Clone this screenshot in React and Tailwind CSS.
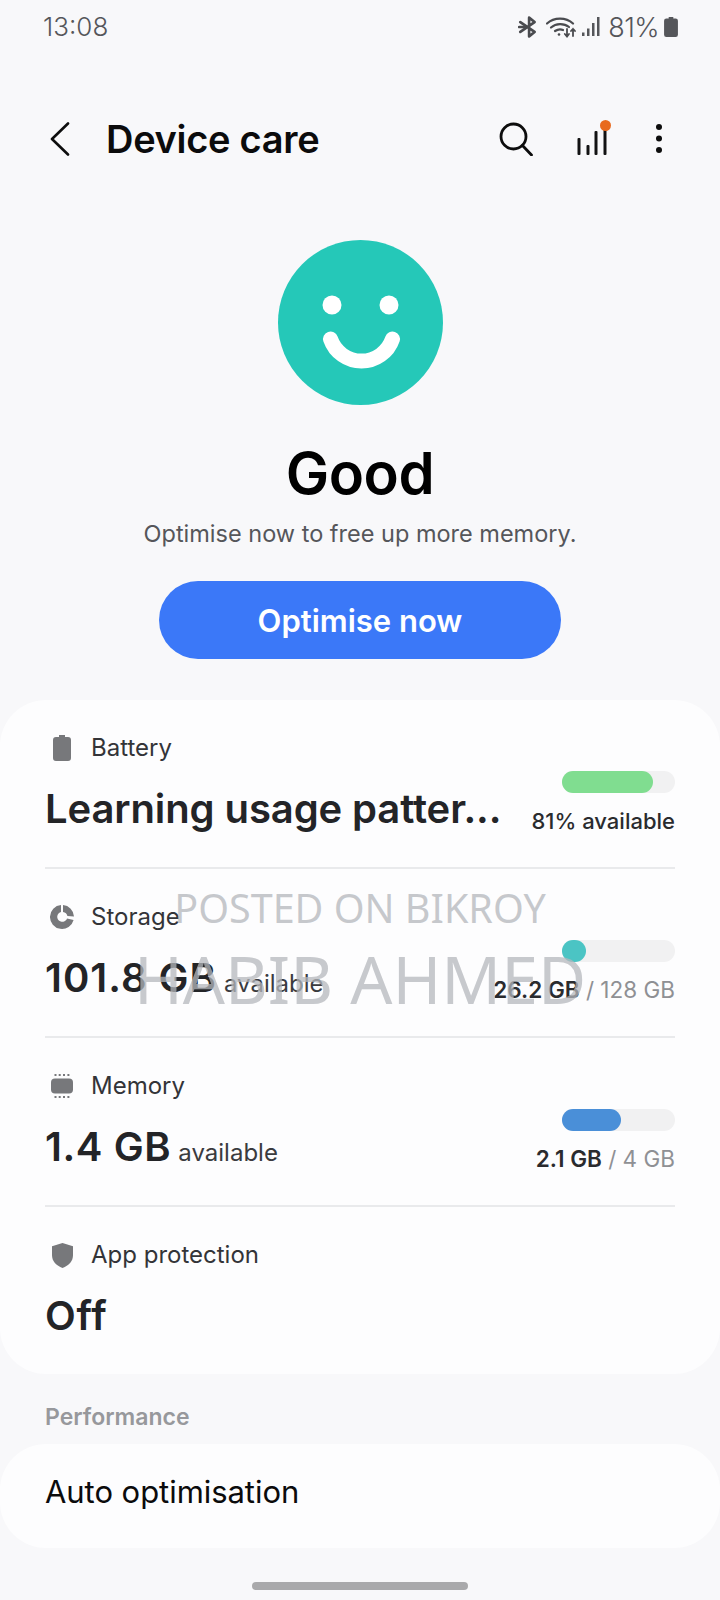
import React from "react";

const BatteryGlyph = ({ className, fill }) => (
  <svg viewBox="0 0 18 26" className={className}>
    <path d="M6 0h6v2h3a3 3 0 0 1 3 3v18a3 3 0 0 1-3 3H3a3 3 0 0 1-3-3V5a3 3 0 0 1 3-3h3z" fill={fill} />
  </svg>
);

const StorageGlyph = () => (
  <svg viewBox="0 0 24 24" className="w-[24px] h-[24px]">
    <path d="M11 0v7a5 5 0 1 0 6 6.4L23.6 15A12 12 0 1 1 11 0z" fill="#77787b" />
    <path d="M13 0a12 12 0 0 1 11 11.4L17.4 11A5 5 0 0 0 13 7z" fill="#77787b" />
  </svg>
);

const MemoryGlyph = () => (
  <svg viewBox="0 0 22 24" className="w-[22px] h-[24px]">
    <rect x="0" y="4.5" width="22" height="15" rx="4" fill="#77787b" />
    <g fill="#77787b">
      <rect x="3.5" y="0" width="2" height="2" /><rect x="7.7" y="0" width="2" height="2" />
      <rect x="12" y="0" width="2" height="2" /><rect x="16.4" y="0" width="2" height="2" />
      <rect x="3.5" y="22" width="2" height="2" /><rect x="7.7" y="22" width="2" height="2" />
      <rect x="12" y="22" width="2" height="2" /><rect x="16.4" y="22" width="2" height="2" />
    </g>
  </svg>
);

const ShieldGlyph = () => (
  <svg viewBox="0 0 21 25" className="w-[21px] h-[25px]">
    <path d="M10.5 0 21 3.2V12c0 6.4-4.2 10.6-10.5 13C4.2 22.6 0 18.4 0 12V3.2z" fill="#77787b" />
  </svg>
);

const Bar = ({ width, color }) => (
  <div className="w-[113px] h-[22px] rounded-full bg-[#f1f1f2] self-end">
    <div className={`h-full rounded-full ${color} ${width}`} />
  </div>
);

const Row = ({ icon, label, value, valueClass, suffix, bar, right }) => (
  <div className="h-[167px] flex justify-between">
    <div className="flex flex-col">
      <div className="flex items-center h-[30px] mt-[33px]">
        <div className="w-[46px] flex justify-center pr-[12px] shrink-0">{icon}</div>
        <span className="text-[24px] leading-[30px] text-[#333438]">{label}</span>
      </div>
      <div className="flex items-baseline mt-[22px] h-[48px]">
        <span className={`text-[40px] leading-[48px] font-semibold text-[#232427] whitespace-nowrap ${valueClass}`}>{value}</span>
        {suffix && <span className="text-[24px] leading-[30px] text-[#3a3b3f] ml-[7px]">{suffix}</span>}
      </div>
    </div>
    {bar && (
      <div className="flex flex-col items-end w-[200px] pt-[71px]">
        {bar}
        <div className="mt-[14px] leading-[28px] whitespace-nowrap">{right}</div>
      </div>
    )}
  </div>
);

const Divider = () => <div className="h-[2px] bg-[#e9eaec]" />;

export default function App() {
  return (
    <div className="relative w-[720px] h-[1600px] overflow-hidden bg-[#f8f8fa] font-['Inter',sans-serif]">
      {/* status bar */}
      <div className="h-[54px] flex items-center justify-between pl-[43px] pr-[42px]">
        <span className="text-[26px] leading-none text-[#55565a] font-light">13:08</span>
        <div className="flex items-center">
          <svg viewBox="0 0 18 20" className="w-[20px] h-[22px]" fill="none" stroke="#4a4b4f" strokeWidth="2.400" strokeLinecap="round" strokeLinejoin="round">
            <path d="M2 5.500 15 14.500 10 18.500V1.500L15 5.500 2 14.500" />
            <path d="M1 10h5" />
          </svg>
          <svg viewBox="0 0 30 22" className="w-[30px] h-[22px] ml-[8px]" fill="none" stroke="#4a4b4f" strokeWidth="2.200" strokeLinecap="round">
            <path d="M1 7.500C8 1 20 1 27 7.500" />
            <path d="M5 11.500C10 7 18 7 23 11" />
            <path d="M9 15c3-2 6-2 8-1" />
            <circle cx="13" cy="18.500" r="1.300" fill="#4a4b4f" stroke="none" />
            <path d="M21 13v7M18.800 18 21 20.500 23 18" strokeWidth="1.800" />
            <path d="M27 20v-7M25 15l2-2.200 2 2.200" strokeWidth="1.800" />
          </svg>
          <svg viewBox="0 0 18 20" className="w-[18px] h-[20px] ml-[6px]" fill="#55565a">
            <rect x="0" y="15.500" width="2.500" height="3.500" /><rect x="5" y="11.500" width="2.500" height="7.500" />
            <rect x="10" y="6" width="2.500" height="13" /><rect x="15" y="0" width="2.500" height="19" />
          </svg>
          <span className="text-[27px] leading-none text-[#55565a] font-light ml-[8px] tracking-[-0.6px]">81%</span>
          <BatteryGlyph className="w-[14px] h-[20px] ml-[5px]" fill="#55565a" />
        </div>
      </div>

      {/* app bar */}
      <div className="h-[170px] flex items-center pl-[50px] pr-[57px]">
        <svg viewBox="0 0 20 34" className="w-[20px] h-[34px]" fill="none" stroke="#0d0d0d" strokeWidth="2.600" strokeLinecap="round" strokeLinejoin="round">
          <path d="M18 1.500 2 17l16 15.500" />
        </svg>
        <h1 className="ml-[36px] text-[38px] leading-none font-semibold text-[#0b0b0c] tracking-[-0.3px]">Device care</h1>
        <div className="ml-auto flex items-center">
          <svg viewBox="0 0 34 34" className="w-[34px] h-[34px]" fill="none" stroke="#0d0d0d" strokeWidth="2.800" strokeLinecap="round">
            <circle cx="14.500" cy="14.500" r="12.500" /><path d="M23.500 23.500 32.500 33" />
          </svg>
          <div className="relative w-[32px] h-[34px] ml-[43px]">
            <svg viewBox="0 0 32 34" className="w-[32px] h-[34px]" fill="#121213">
              <rect x="1.500" y="16" width="3" height="17" rx="1" /><rect x="10.500" y="23" width="3" height="10" rx="1" />
              <rect x="18.500" y="9" width="3" height="24" rx="1" /><rect x="27.500" y="3" width="3" height="30" rx="1" />
            </svg>
            <div className="absolute left-[23.500px] -top-[2.500px] w-[11px] h-[11px] rounded-full bg-[#e86a1f]" />
          </div>
          <svg viewBox="0 0 8 34" className="w-[8px] h-[34px] ml-[47px]" fill="#0d0d0d">
            <circle cx="4" cy="5" r="3" /><circle cx="4" cy="16.500" r="3" /><circle cx="4" cy="28" r="3" />
          </svg>
        </div>
      </div>

      {/* hero */}
      <div className="flex flex-col items-center mt-[16px]">
        <svg viewBox="0 0 165 165" className="w-[165px] h-[165px]">
          <circle cx="82.500" cy="82.500" r="82.500" fill="#25c8b8" />
          <circle cx="54" cy="65" r="9.500" fill="#fff" />
          <circle cx="111" cy="65" r="9.500" fill="#fff" />
          <path d="M52.500 99A32.800 32.800 0 0 0 114.500 99" fill="none" stroke="#fff" strokeWidth="15" strokeLinecap="round" />
        </svg>
        <div className="mt-[36px] text-[58px] leading-[64px] font-semibold text-black tracking-[-0.4px]">Good</div>
        <p className="mt-[14px] text-[23.500px] leading-[30px] text-[#55565a]">Optimise now to free up more memory.</p>
        <button className="mt-[32px] w-[402px] h-[78px] pt-[2px] rounded-full bg-[#3b78f8] text-white text-[31px] font-semibold">Optimise now</button>
      </div>

      {/* main card */}
      <div className="mt-[41px] h-[674px] rounded-[46px] bg-[#fdfdfe] px-[45px]">
        <Row
          icon={<BatteryGlyph className="w-[18px] h-[26px]" fill="#77787b" />}
          label="Battery"
          value="Learning usage patter..."
          valueClass="tracking-[-0.1px]"
          bar={<Bar width="w-[91px]" color="bg-[#80dd90]" />}
          right={<span className="text-[22px] font-medium text-[#2a2b2e]">81% available</span>}
        />
        <Divider />
        <Row
          icon={<StorageGlyph />}
          label="Storage"
          value="101.8 GB"
          valueClass="tracking-[1px]"
          suffix="available"
          bar={<Bar width="w-[24px]" color="bg-[#4bc4c4]" />}
          right={<span className="text-[22.500px]"><span className="font-semibold text-[#2a2b2e]">26.2 GB</span><span className="text-[#8f9094]"> / 128 GB</span></span>}
        />
        <Divider />
        <Row
          icon={<MemoryGlyph />}
          label="Memory"
          value="1.4 GB"
          valueClass="tracking-[0.6px]"
          suffix="available"
          bar={<Bar width="w-[59px]" color="bg-[#4a8fd8]" />}
          right={<span className="text-[22.500px]"><span className="font-semibold text-[#2a2b2e]">2.1 GB</span><span className="text-[#8f9094]"> / 4 GB</span></span>}
        />
        <Divider />
        <Row icon={<ShieldGlyph />} label="App protection" value="Off" valueClass="tracking-[0.8px]" />
      </div>

      {/* performance */}
      <div className="mt-[28px] px-[45px] text-[23px] leading-[30px] font-semibold text-[#97989c]">Performance</div>
      <div className="mt-[12px] h-[104px] rounded-[46px] bg-[#fdfdfe] px-[45px] pb-[10px] flex items-center">
        <span className="text-[31px] leading-none text-[#0b0b0c] tracking-[-0.05px]">Auto optimisation</span>
      </div>

      {/* home indicator */}
      <div className="absolute left-[252px] top-[1582px] w-[216px] h-[8px] rounded-full bg-[#a9a9ab]" />

      {/* watermark */}
      <div className="absolute left-0 right-0 top-[880px] flex flex-col items-center pointer-events-none font-['Noto_Sans',sans-serif] font-normal text-[#b4b7bc]/75 whitespace-nowrap">
        <span className="text-[39.500px] leading-[56px]">POSTED ON BIKROY</span>
        <span className="text-[66px] leading-[84px]">HABIB AHMED</span>
      </div>
    </div>
  );
}
